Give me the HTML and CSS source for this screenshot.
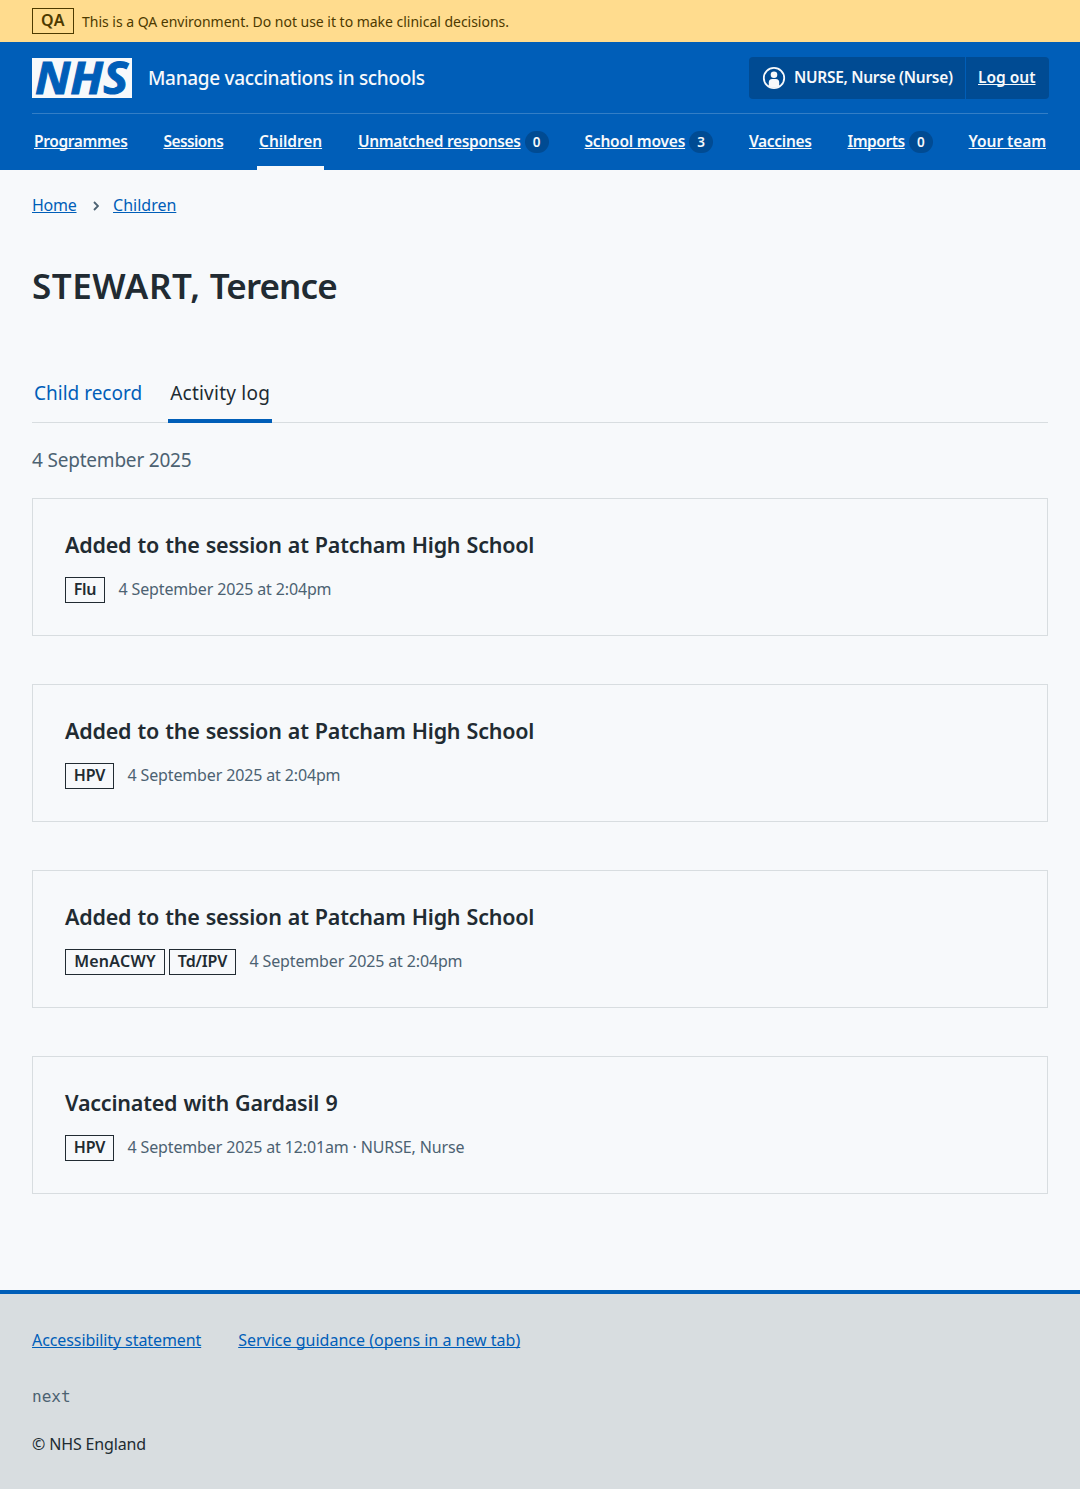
FILE: index.html
```html
<!DOCTYPE html>
<html lang="en">
<head>
<meta charset="utf-8">
<title>STEWART, Terence – Manage vaccinations in schools</title>
<link rel="stylesheet" href="styles.css">
</head>
<body>
<div class="environment">
  <strong class="tag tag--environment">QA</strong>
  <span class="environment__text">This is a QA environment. Do not use it to make clinical decisions.</span>
</div>
<header class="header">
  <div class="header__top">
    <a class="header__service" href="#">
      <svg class="logo" viewBox="0 0 100 40" width="100" height="40" role="img" aria-label="NHS">
        <rect class="logo__box" width="100" height="40"/>
        <text class="logo__text" x="3" y="36" textLength="93" lengthAdjust="spacingAndGlyphs">NHS</text>
      </svg>
      <span class="header__name">Manage vaccinations in schools</span>
    </a>
    <div class="account">
      <span class="account__user">
        <svg class="account__icon" viewBox="0 0 24 24" width="24" height="24" aria-hidden="true">
          <circle cx="12" cy="12" r="10.2" fill="none" stroke="currentColor" stroke-width="1.8"/>
          <circle cx="12" cy="8.7" r="3.3" fill="currentColor"/>
          <path d="M6.8 20.2V16.6Q6.8 13 10.2 13H13.8Q17.2 13 17.2 16.6V20.2Q12 23.4 6.8 20.2Z" fill="currentColor"/>
        </svg>
        <span class="account__name">NURSE, Nurse (Nurse)</span>
      </span>
      <a class="account__logout" href="#">Log out</a>
    </div>
  </div>
  <nav class="nav">
    <a class="nav__item nav__item--programmes" href="#"><span class="nav__label">Programmes</span></a>
    <a class="nav__item nav__item--sessions" href="#"><span class="nav__label">Sessions</span></a>
    <a class="nav__item nav__item--children nav__item--current" href="#"><span class="nav__label">Children</span></a>
    <a class="nav__item nav__item--responses" href="#"><span class="nav__label">Unmatched responses</span><span class="count">0</span></a>
    <a class="nav__item nav__item--moves" href="#"><span class="nav__label">School moves</span><span class="count">3</span></a>
    <a class="nav__item nav__item--vaccines" href="#"><span class="nav__label">Vaccines</span></a>
    <a class="nav__item nav__item--imports" href="#"><span class="nav__label">Imports</span><span class="count">0</span></a>
    <a class="nav__item nav__item--team" href="#"><span class="nav__label">Your team</span></a>
  </nav>
</header>
<main class="main">
  <nav class="breadcrumb">
    <a class="breadcrumb__home" href="#">Home</a>
    <svg class="breadcrumb__chevron" viewBox="0 0 6 10" width="6" height="10" aria-hidden="true"><path d="M1 1l4 4-4 4" fill="none" stroke="currentColor" stroke-width="1.8"/></svg>
    <a href="#">Children</a>
  </nav>
  <h1 class="title"><span class="title__surname">STEWART,</span> <span class="title__forename">Terence</span></h1>
  <nav class="tabs">
    <a class="tabs__item" href="#">Child record</a>
    <a class="tabs__item tabs__item--current" href="#">Activity log</a>
  </nav>
  <h2 class="date">4 September 2025</h2>
  <div class="cards">
    <article class="card">
      <h3 class="card__title">Added to the session at Patcham High School</h3>
      <div class="card__meta"><strong class="tag tag--flu">Flu</strong><span class="card__time">4 September 2025 at 2:04pm</span></div>
    </article>
    <article class="card">
      <h3 class="card__title">Added to the session at Patcham High School</h3>
      <div class="card__meta"><strong class="tag tag--hpv">HPV</strong><span class="card__time">4 September 2025 at 2:04pm</span></div>
    </article>
    <article class="card">
      <h3 class="card__title">Added to the session at Patcham High School</h3>
      <div class="card__meta"><strong class="tag tag--menacwy">MenACWY</strong><strong class="tag tag--tdipv">Td/IPV</strong><span class="card__time">4 September 2025 at 2:04pm</span></div>
    </article>
    <article class="card">
      <h3 class="card__title">Vaccinated with Gardasil 9</h3>
      <div class="card__meta"><strong class="tag tag--hpv">HPV</strong><span class="card__time">4 September 2025 at 12:01am · NURSE, Nurse</span></div>
    </article>
  </div>
</main>
<footer class="footer">
  <div class="footer__links">
    <a href="#">Accessibility statement</a>
    <a href="#">Service guidance (opens in a new tab)</a>
  </div>
  <code class="footer__version">next</code>
  <p class="footer__copyright">© NHS England</p>
</footer>
</body>
</html>
```
FILE: styles.css
```css
:root {
  --blue: #005eb8;
  --blue-dark: #004b93;
  --page: #f7f9fb;
  --text: #212b32;
  --text-secondary: #4c6272;
  --border: #d8dde0;
}

* { box-sizing: border-box; }

body {
  margin: 0;
  min-height: 1489px;
  display: flex;
  flex-direction: column;
  background: var(--page);
  color: var(--text);
  font: 16px/24px "Noto Sans", "Open Sans", sans-serif;
}

h1, h2, h3, p { margin: 0; }

a {
  color: var(--blue);
  text-decoration-thickness: 1px;
  text-underline-offset: 1px;
  text-decoration-skip-ink: none;
}

/* Environment banner */
.environment {
  display: flex;
  align-items: center;
  gap: 8px;
  height: 42px;
  padding: 0 32px;
  background: #ffdc8e;
  color: #4d3a00;
}
.environment__text {
  padding-top: 1px;
  font-size: 14px;
  line-height: 20px;
  letter-spacing: -0.02px;
}

.tag {
  display: flex;
  justify-content: center;
  height: 26px;
  padding: 0 8px;
  border: 1px solid currentColor;
  font-weight: 600;
  line-height: 23px;
  white-space: nowrap;
}
.tag--environment { width: 42px; letter-spacing: 0.4px; }
.tag--flu { width: 40px; letter-spacing: -0.3px; }
.tag--hpv { width: 49px; letter-spacing: -0.2px; }
.tag--menacwy { width: 100px; letter-spacing: 0.25px; }
.tag--tdipv { width: 67px; letter-spacing: -0.15px; }

/* Header */
.header {
  height: 128px;
  padding: 0 32px;
  background: var(--blue);
  color: var(--page);
}
.header a { color: inherit; }
.header__top {
  display: flex;
  align-items: center;
  justify-content: space-between;
  height: 72px;
  border-bottom: 1px solid #337ec6;
}
.header .header__service {
  display: flex;
  align-items: center;
  gap: 16px;
  text-decoration: none;
}
.logo { display: block; overflow: visible; }
.logo__box { fill: var(--page); }
.logo__text {
  fill: var(--blue);
  font: italic 700 44.5px "Open Sans", "Noto Sans", sans-serif;
  stroke: var(--blue);
  stroke-width: 1px;
}
.header__name {
  font-size: 19px;
  font-weight: 500;
  letter-spacing: -0.32px;
}
.account {
  display: flex;
  height: 42px;
  margin-right: -1px;
  border-radius: 4px;
  background: var(--blue-dark);
  font-size: 15.5px;
  font-weight: 600;
  line-height: 41px;
}
.account__user {
  display: flex;
  align-items: center;
  gap: 8px;
  width: 217px;
  padding-left: 13px;
  border-right: 1px solid var(--blue);
  letter-spacing: -0.3px;
}
.account__name { padding-bottom: 1px; }
.account__logout {
  width: 83px;
  padding-left: 12px;
}

.nav {
  display: flex;
  justify-content: space-between;
  height: 56px;
}
.nav .nav__item {
  display: flex;
  padding: 15px 2px 0;
  font-size: 15.5px;
  font-weight: 600;
  text-decoration: none;
}
.nav__label { text-decoration: underline 1px; text-underline-offset: 1px; }
.nav__item--current { box-shadow: inset 0 -4px var(--page); }
.nav__item--programmes { letter-spacing: -0.36px; }
.nav__item--sessions { letter-spacing: -0.57px; }
.nav__item--children { letter-spacing: -0.08px; }
.nav__item--responses { letter-spacing: -0.32px; }
.nav__item--moves { letter-spacing: -0.21px; }
.nav__item--vaccines { letter-spacing: -0.31px; }
.nav__item--imports { letter-spacing: -0.46px; }
.nav__item--team { letter-spacing: -0.08px; }
.count {
  width: 24px;
  height: 22px;
  margin: 2px 0 0 4px;
  border-radius: 12px;
  background: var(--blue-dark);
  font-size: 13.5px;
  line-height: 22px;
  letter-spacing: 0;
  text-align: center;
}

/* Main content */
.main {
  flex: 1;
  padding: 23px 32px 0;
}
.breadcrumb {
  display: flex;
  align-items: center;
}
.breadcrumb__home { letter-spacing: -0.25px; }
.breadcrumb__chevron {
  margin: 2px 14px 0 16.5px;
  color: var(--text-secondary);
}
.title {
  margin-top: 45px;
  font-size: 35px;
  font-weight: 600;
  line-height: 48px;
}
.title__surname { letter-spacing: 0.55px; }
.title__forename { letter-spacing: -0.9px; }
.tabs {
  display: flex;
  gap: 24px;
  height: 54px;
  margin-top: 59px;
  border-bottom: 1px solid var(--border);
}
.tabs__item {
  height: 54px;
  padding: 10px 2px 0;
  font-size: 19px;
  line-height: 28px;
  text-decoration: none;
}
.tabs__item--current {
  color: var(--text);
  border-bottom: 4px solid var(--blue);
  letter-spacing: 0.24px;
}
.date {
  margin-top: 23px;
  color: var(--text-secondary);
  font-size: 19px;
  font-weight: 400;
  line-height: 28px;
  letter-spacing: -0.2px;
}
.cards {
  display: flex;
  flex-direction: column;
  gap: 48px;
  margin-top: 24px;
}
.card {
  height: 138px;
  padding: 32px;
  border: 1px solid var(--border);
}
.card__title {
  font-size: 21.5px;
  font-weight: 600;
  line-height: 28px;
  letter-spacing: -0.22px;
  word-spacing: 0.8px;
}
.card__meta {
  display: flex;
  gap: 4px;
  margin-top: 18px;
}
.card__time {
  margin-left: 9.5px;
  color: var(--text-secondary);
  letter-spacing: -0.14px;
}

/* Footer */
.footer {
  height: 199px;
  padding: 34px 32px 0;
  border-top: 4px solid var(--blue);
  background: #d8dde0;
}
.footer__links {
  display: flex;
  gap: 37px;
}
.footer__links a:first-child { letter-spacing: -0.09px; }
.footer__version {
  display: block;
  margin-top: 33px;
  color: var(--text-secondary);
  font: 16px/24px "DejaVu Sans Mono", monospace;
}
.footer__copyright {
  margin-top: 23px;
  letter-spacing: -0.14px;
}
```
